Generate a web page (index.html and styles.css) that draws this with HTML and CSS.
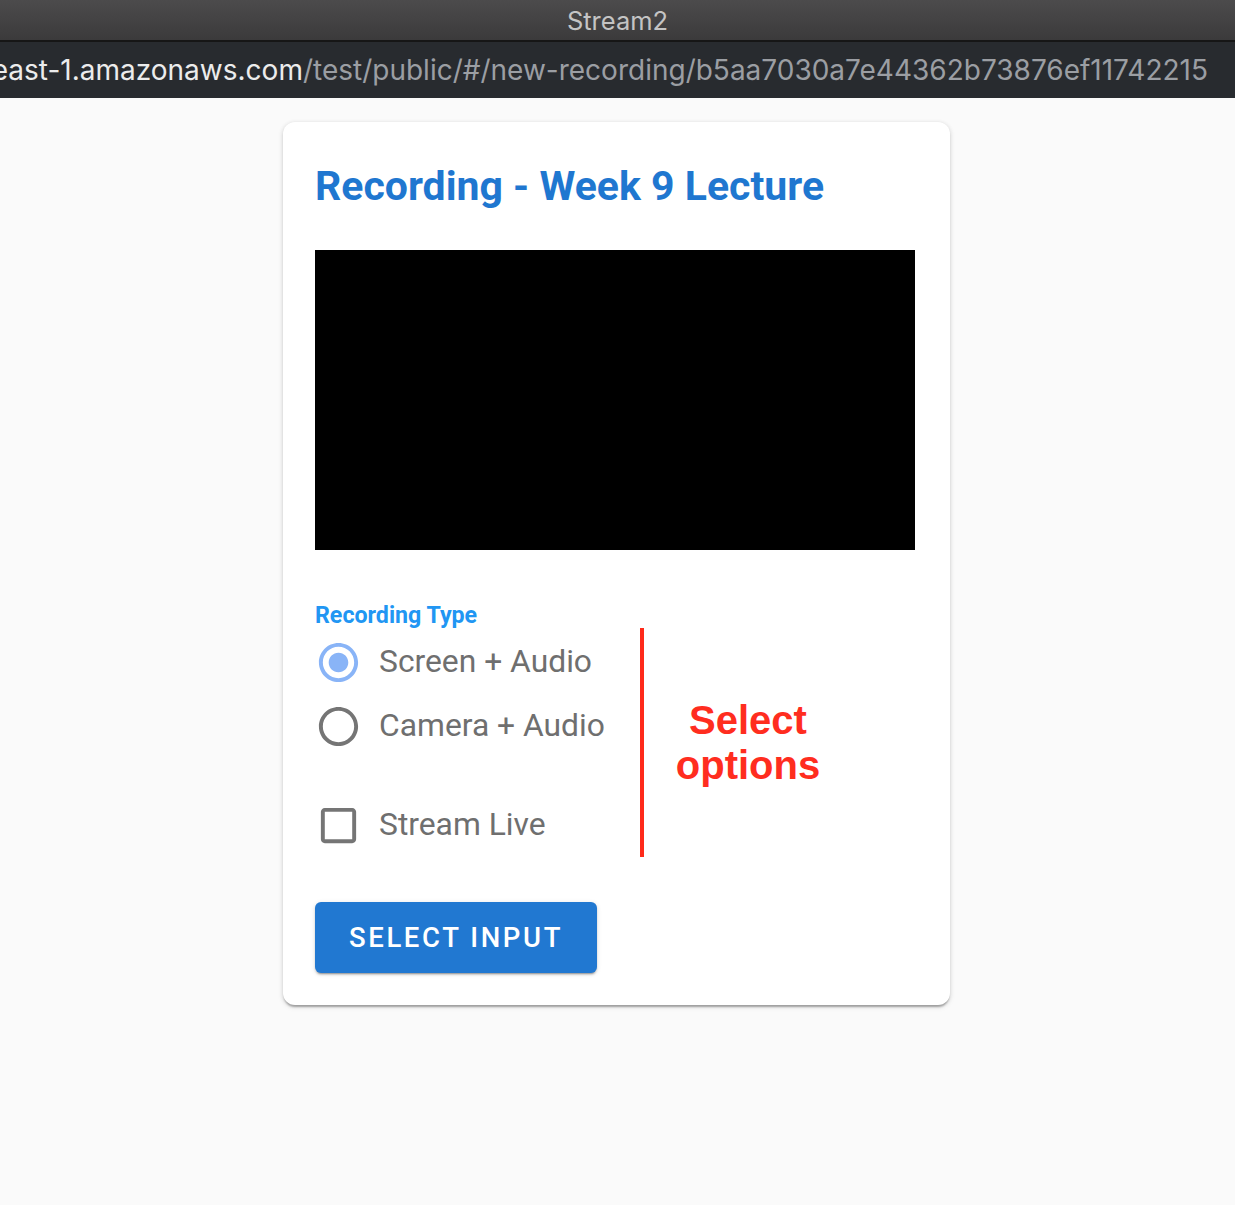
FILE: index.html
```html
<!DOCTYPE html>
<html lang="en">
<head>
<meta charset="utf-8">
<title>Stream2</title>
<link rel="stylesheet" href="styles.css">
</head>
<body>
<div class="titlebar">Stream2</div>
<div class="urlbar"><span class="url"><span class="host">east-1.amazonaws.com</span><span class="path">/test/public/#/new-recording/b5aa7030a7e44362b73876ef11742215</span></span></div>
<main class="page">
  <section class="card">
    <h1 class="title">Recording - Week 9 Lecture</h1>
    <div class="video"></div>
    <div class="type-label">Recording Type</div>
    <div class="options-row">
      <div class="options">
        <div class="option">
          <svg class="icon radio-on" viewBox="0 0 24 24"><path d="M12 7c-2.76 0-5 2.240-5 5s2.24 5 5 5 5-2.24 5-5-2.24-5-5-5zm0-5C6.48 2 2 6.48 2 12s4.48 10 10 10 10-4.48 10-10S17.52 2 12 2zm0 18c-4.42 0-8-3.58-8-8s3.58-8 8-8 8 3.58 8 8-3.580 8-8 8z"/></svg>
          <span class="option-text">Screen + Audio</span>
        </div>
        <div class="option">
          <svg class="icon radio-off" viewBox="0 0 24 24"><path d="M12 2C6.48 2 2 6.48 2 12s4.48 10 10 10 10-4.48 10-10S17.52 2 12 2zm0 18c-4.42 0-8-3.58-8-8s3.58-8 8-8 8 3.58 8 8-3.58 8-8 8z"/></svg>
          <span class="option-text">Camera + Audio</span>
        </div>
        <div class="option option-check">
          <svg class="icon checkbox" viewBox="0 0 24 24"><path d="M19 5v14H5V5h14m0-2H5c-1.1 0-2 .9-2 2v14c0 1.1.9 2 2 2h14c1.1 0 2-.9 2-2V5c0-1.1-.9-2-2-2z"/></svg>
          <span class="option-text">Stream Live</span>
        </div>
      </div>
      <div class="red-line"></div>
      <div class="note">Select<br>options</div>
    </div>
    <button class="select-btn">Select Input</button>
  </section>
</main>
</body>
</html>
```
FILE: styles.css
```css
html, body {
  margin: 0;
  padding: 0;
}
body {
  background: #fafafa;
  font-family: Roboto, "Liberation Sans", sans-serif;
  width: 1235px;
  height: 1205px;
  overflow: hidden;
}
.titlebar {
  height: 40px;
  background: linear-gradient(#4c4b4c, #3b3a3b);
  color: #c4c4c4;
  font-family: Inter, "Liberation Sans", sans-serif;
  font-size: 25.5px;
  line-height: 42px;
  text-align: center;
  border-bottom: 2px solid #161616;
}
.urlbar {
  height: 56px;
  background: #282b2f;
  display: flex;
  justify-content: flex-end;
  align-items: center;
  padding-right: 27px;
  overflow: hidden;
  white-space: nowrap;
}
.url {
  font-family: Inter, "Liberation Sans", sans-serif;
  font-size: 28px;
  line-height: 56px;
}
.host { color: #ececec; }
.path { color: #9b9ea3; }
.page {
  padding-top: 24px;
}
.card {
  width: 603px;
  margin: 0 auto 0 283px;
  background: #fff;
  border-radius: 12px;
  padding: 32px;
  box-shadow: 0 3px 2px -1px rgba(0,0,0,0.28), 0 1px 4px 0 rgba(0,0,0,0.12), 0 2px 6px 0 rgba(0,0,0,0.08);
}
.title {
  margin: 8px 0 0;
  font-size: 41px;
  line-height: 48px;
  font-weight: 700;
  color: #1f77d0;
}
.video {
  margin-top: 40px;
  width: 600px;
  height: 300px;
  background: #000;
}
.type-label {
  margin-top: 52px;
  font-size: 23.2px;
  line-height: 26px;
  font-weight: 700;
  color: #2196f3;
}
.options-row {
  display: flex;
  align-items: stretch;
}
.options {
  width: 325px;
  padding-top: 2px;
}
.option {
  height: 64px;
  display: flex;
  align-items: center;
}
.option-check {
  margin-top: 35px;
}
.icon {
  width: 47px;
  height: 47px;
  flex: none;
}
.radio-on { fill: #89b4f7; }
.radio-off, .checkbox { fill: #757575; }
.option-text {
  margin-left: 17px;
  font-size: 31.8px;
  line-height: 40px;
  color: #6f6f6f;
  position: relative;
  top: -1px;
}
.red-line {
  width: 4px;
  background: #ff2a1a;
  flex: none;
}
.note {
  width: 208px;
  display: flex;
  align-items: center;
  justify-content: center;
  text-align: center;
  font-family: "Liberation Sans", Arial, sans-serif;
  font-weight: 700;
  font-size: 40px;
  line-height: 45px;
  color: #ff2d1f;
}
.select-btn {
  margin-top: 45px;
  width: 282px;
  height: 71px;
  border: none;
  border-radius: 6px;
  background: #2178d1;
  color: #fff;
  font-family: Roboto, "Liberation Sans", sans-serif;
  font-weight: 500;
  font-size: 27.5px;
  letter-spacing: 0.095em;
  text-transform: uppercase;
  box-shadow: 0 3px 1px -2px rgba(0,0,0,0.2), 0 2px 2px 0 rgba(0,0,0,0.14), 0 1px 5px 0 rgba(0,0,0,0.12);
  display: block;
  padding: 0;
}
```
